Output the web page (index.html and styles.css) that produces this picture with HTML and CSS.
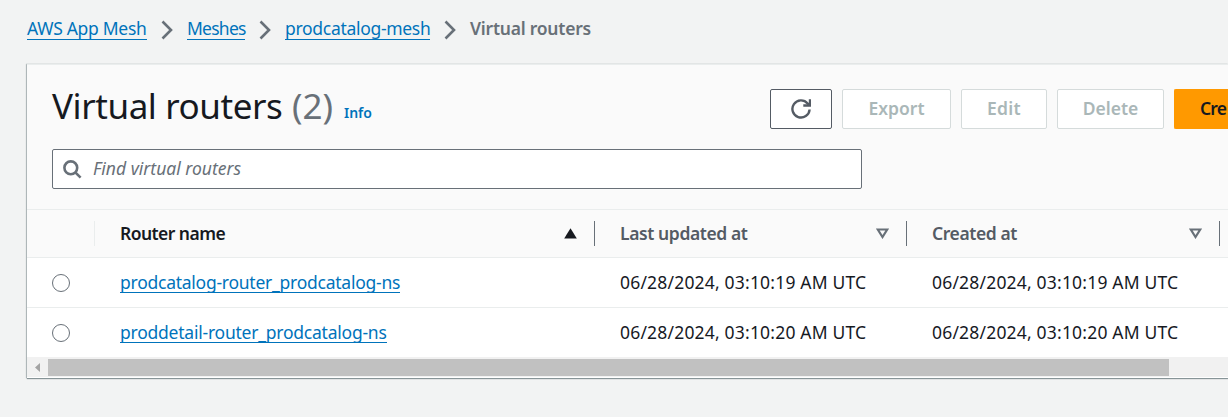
FILE: index.html
```html
<!DOCTYPE html>
<html lang="en">
<head>
<meta charset="utf-8">
<title>Virtual routers</title>
<link rel="stylesheet" href="styles.css">
</head>
<body>
<nav class="crumbs">
  <a class="link crumb-app">AWS App Mesh</a>
  <svg class="chevron" viewBox="0 0 12 20"><path d="M1.5 1.5 10 10 1.5 18.5"/></svg>
  <a class="link crumb-meshes">Meshes</a>
  <svg class="chevron" viewBox="0 0 12 20"><path d="M1.5 1.5 10 10 1.5 18.5"/></svg>
  <a class="link crumb-mesh">prodcatalog-mesh</a>
  <svg class="chevron" viewBox="0 0 12 20"><path d="M1.5 1.5 10 10 1.5 18.5"/></svg>
  <span class="crumb-current">Virtual routers</span>
</nav>
<main class="panel">
  <header class="panel-header">
    <h1 class="title">Virtual routers <span class="count">(2)</span></h1>
    <a class="info">Info</a>
    <div class="actions">
      <button class="btn btn-refresh"><svg class="refresh" viewBox="0 0 20 20"><path d="M18.6 10.5A8.6 8.6 0 1 1 16.6 4.4L18.5 6.3"/><path d="M19 .2V6.5H12.3"/></svg></button>
      <button class="btn btn-export">Export</button>
      <button class="btn btn-edit">Edit</button>
      <button class="btn btn-delete">Delete</button>
      <button class="btn btn-create">Cre</button>
    </div>
  </header>
  <div class="search">
    <svg class="magnifier" viewBox="0 0 19 19"><circle cx="7.8" cy="7.8" r="6.4"/><path d="M12.3 12.3 17.6 17.6"/></svg>
    <span class="placeholder">Find virtual routers</span>
  </div>
  <div class="row head">
    <div class="cell pick"></div>
    <div class="cell name sorted"><span class="label h-name">Router name</span><svg class="sort" viewBox="0 0 13 11"><path class="fill" d="M6.5 .3 12.8 10.6H.2z"/></svg></div>
    <div class="cell updated"><span class="label h-updated">Last updated at</span><svg class="sort" viewBox="0 0 13 11"><path class="hollow" d="M1.8 1.5H11.2L6.5 9z"/></svg></div>
    <div class="cell created"><span class="label h-created">Created at</span><svg class="sort" viewBox="0 0 13 11"><path class="hollow" d="M1.8 1.5H11.2L6.5 9z"/></svg></div>
  </div>
  <div class="row">
    <div class="cell pick"><span class="radio"></span></div>
    <div class="cell name"><a class="link router router-a">prodcatalog-router_prodcatalog-ns</a></div>
    <div class="cell updated"><span class="date">06/28/2024, 03:10:19 AM UTC</span></div>
    <div class="cell created"><span class="date">06/28/2024, 03:10:19 AM UTC</span></div>
  </div>
  <div class="row last">
    <div class="cell pick"><span class="radio"></span></div>
    <div class="cell name"><a class="link router router-b">proddetail-router_prodcatalog-ns</a></div>
    <div class="cell updated"><span class="date">06/28/2024, 03:10:20 AM UTC</span></div>
    <div class="cell created"><span class="date">06/28/2024, 03:10:20 AM UTC</span></div>
  </div>
  <div class="scrollbar"><svg class="arrow" viewBox="0 0 5 9"><path d="M5 0V9L0 4.5z"/></svg><div class="thumb"></div></div>
</main>
</body>
</html>
```

FILE: styles.css
```css
* { box-sizing: border-box; }
body {
  margin: 0;
  height: 417px;
  overflow: hidden;
  background: #f2f3f3;
  color: #16191f;
  font: 17.5px/22px "Noto Sans", sans-serif;
  white-space: nowrap;
}
.crumbs { display: flex; height: 64px; padding: 18px 0 0 27px; }
.link { display: block; height: 22px; color: #0073bb; border-bottom: 1px solid #0073bb; line-height: 20px; }
.chevron { width: 12px; height: 20px; margin: 2px 14px 0; fill: none; stroke: #687078; stroke-width: 2.6; flex: none; }
.crumb-app { width: 120px; letter-spacing: -.3px; }
.crumb-meshes { width: 58px; letter-spacing: -.75px; }
.crumb-mesh { width: 145px; letter-spacing: -.3px; }
.crumb-current { color: #687078; font-weight: 600; letter-spacing: -.23px; line-height: 20px; }
.panel {
  margin-left: 27px;
  height: 314px;
  border-top: 1px solid #eaeded;
  background: linear-gradient(#fafafa 145px, #fff 145px);
  box-shadow: 0 1px 1px rgba(0, 28, 36, .4), -1px 0 1px rgba(0, 28, 36, .2), 0 0 0 1px rgba(0, 28, 36, .03);
}
.panel-header { display: flex; height: 84px; padding: 24px 0 0 25px; }
.title { flex: none; margin: 0; width: 292px; font-size: 35px; line-height: 34px; font-weight: 400; letter-spacing: -.42px; }
.count { margin-left: 1px; color: #687078; letter-spacing: 0; }
.info { flex: none; width: 426px; padding-top: 14px; color: #0073bb; font-size: 14px; line-height: 20px; font-weight: 600; }
.actions { display: flex; gap: 10px; }
.btn {
  flex: none;
  height: 40px;
  padding: 0;
  border: 1px solid #d5dbdb;
  border-radius: 2px;
  background: #fff;
  color: #aab7b8;
  font: 600 17.5px/36px "Noto Sans", sans-serif;
  padding-bottom: 2px;
}
.btn-refresh { width: 62px; padding: 0; border-color: #545b64; display: grid; place-items: center; }
.refresh { width: 20px; height: 20px; fill: none; stroke: #545b64; stroke-width: 2.4; }
.btn-export { width: 109px; }
.btn-edit { width: 86px; letter-spacing: .3px; }
.btn-delete { width: 107px; }
.btn-create { width: 54px; padding-left: 25px; overflow: hidden; text-align: left; background: #ff9900; border: 1px solid #ff9900; border-right: 0; border-radius: 2px 0 0 2px; color: #16191f; letter-spacing: -.8px; }
.search {
  display: flex;
  align-items: center;
  width: 810px;
  height: 40px;
  margin-left: 25px;
  padding-left: 10px;
  gap: 11px;
  border: 1px solid #687078;
  border-radius: 2px;
  background: #fff;
  color: #687078;
  font-style: italic;
}
.placeholder { padding-bottom: 2px; }
.magnifier { width: 19px; height: 19px; fill: none; stroke: #687078; stroke-width: 2.6; }
.row { display: flex; height: 50px; border-bottom: 1px solid #eaeded; }
.last { height: 49px; border-bottom: 0; }
.head { height: 49px; margin-top: 20px; border-top: 1px solid #eaeded; background: #fafafa; font-weight: 600; color: #545b64; }
.cell { display: flex; align-items: center; flex: none; }
.pick { width: 68px; padding-left: 25px; }
.name { width: 500px; padding-left: 25px; }
.updated { width: 312px; padding-left: 25px; }
.created { width: 313px; padding-left: 25px; }
.head .cell { height: 25px; margin-top: 11px; border-right: 1px solid #687078; justify-content: space-between; padding-right: 17px; }
.head .pick { border-color: #eaeded; }
.label { padding-bottom: 2px; }
.h-name { letter-spacing: -.55px; }
.h-updated { letter-spacing: -.4px; }
.h-created { letter-spacing: -.4px; }
.sorted { color: #16191f; }
.sort { width: 13px; height: 11px; }
.fill { fill: #16191f; }
.hollow { fill: none; stroke: #687078; stroke-width: 2.2; }
.router { margin-bottom: 2px; line-height: 22px; }
.router-a { width: 280px; letter-spacing: -.25px; }
.router-b { width: 267px; letter-spacing: -.23px; }
.date { padding-bottom: 2px; letter-spacing: .19px; }
.radio { width: 18px; height: 18px; border: 1px solid #687078; border-radius: 50%; }
.scrollbar { display: flex; height: 20px; padding: 2px 0 1px 8px; background: #f1f1f1; }
.arrow { width: 5px; height: 9px; margin: 4px 8px 0 0; fill: #a3a3a3; }
.thumb { width: 1121px; height: 17px; background: #c1c1c1; }
```
